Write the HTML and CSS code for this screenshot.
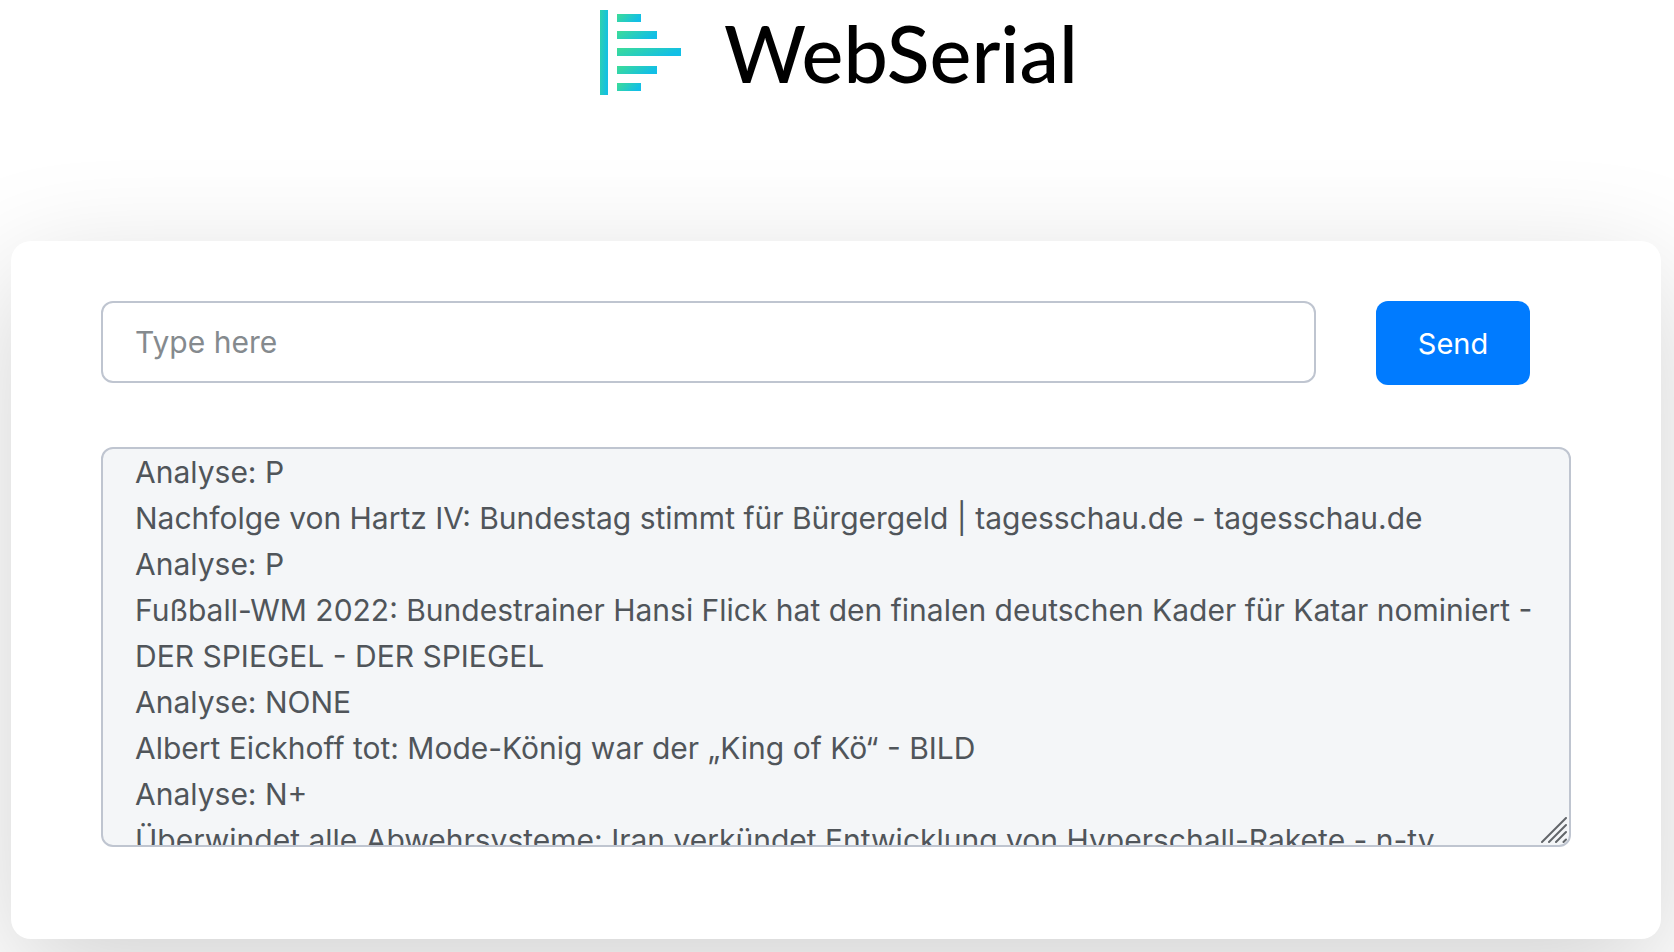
FILE: index.html
```html
<!DOCTYPE html>
<html lang="en">
<head>
<meta charset="utf-8">
<meta name="viewport" content="width=device-width, initial-scale=1">
<title>WebSerial</title>
<link rel="stylesheet" href="styles.css">
</head>
<body>
<header class="brand">
  <svg class="brand-mark" viewBox="0 0 82 86" aria-hidden="true">
    <defs>
      <linearGradient id="bar" x1="0" y1="0" x2="1" y2="0.3">
        <stop offset="0" stop-color="#3ddc97"/>
        <stop offset="1" stop-color="#12bfe6"/>
      </linearGradient>
      <linearGradient id="post" x1="0" y1="0" x2="1" y2="0.3">
        <stop offset="0" stop-color="#30d2ac"/>
        <stop offset="1" stop-color="#14c0e2"/>
      </linearGradient>
    </defs>
    <rect x="0" y="0" width="8" height="85" fill="url(#post)"/>
    <g fill="url(#bar)">
      <rect x="17" y="4" width="24" height="8"/>
      <rect x="17" y="21" width="40" height="8"/>
      <rect x="17" y="38" width="64" height="8"/>
      <rect x="17" y="56" width="40" height="8"/>
      <rect x="17" y="73" width="24" height="8"/>
    </g>
  </svg>
  <h1 class="brand-name">WebSerial</h1>
</header>
<main class="card">
  <form class="send-row">
    <input class="field message" type="text" placeholder="Type here" aria-label="Message">
    <button class="send" type="button">Send</button>
  </form>
  <div class="console">
    <textarea class="field log" aria-label="Serial output" readonly>Analyse: P
Nachfolge von Hartz IV: Bundestag stimmt für Bürgergeld | tagesschau.de - tagesschau.de
Analyse: P
Fußball-WM 2022: Bundestrainer Hansi Flick hat den finalen deutschen Kader für Katar nominiert - DER SPIEGEL - DER SPIEGEL
Analyse: NONE
Albert Eickhoff tot: Mode-König war der „King of Kö“ - BILD
Analyse: N+
Überwindet alle Abwehrsysteme: Iran verkündet Entwicklung von Hyperschall-Rakete - n-tv</textarea>
    <svg class="grip" viewBox="0 0 26 26" aria-hidden="true">
      <path d="M1 25 25 1M8 25 25 8M15 25 25 15M22.5 25 25 22.5"/>
    </svg>
  </div>
</main>
</body>
</html>
```
FILE: styles.css
```css
* {
  box-sizing: border-box;
}

body {
  margin: 0;
  min-height: 100vh;
  background: #fff;
  color: #50555a;
  font-family: Inter, "Liberation Sans", sans-serif;
  overflow: hidden;
}

.brand {
  display: flex;
  justify-content: center;
  gap: 42px;
  padding: 10px 0 0 4px;
}

.brand-mark {
  width: 82px;
  height: 86px;
}

.brand-name {
  margin: 0;
  color: #000;
  font-family: Lato, sans-serif;
  font-size: 79px;
  font-weight: 500;
  line-height: 86px;
}

.card {
  margin: 145px 13px 0 11px;
  padding: 60px 90px 92px;
  border-radius: 20px;
  background: #fff;
  box-shadow: 0 35px 120px rgba(0, 0, 0, 0.18);
}

.send-row {
  display: flex;
  align-items: flex-start;
  gap: 60px;
  padding-right: 41px;
}

.field {
  display: block;
  border: 2px solid #bfc5d0;
  border-radius: 12px;
  color: #50555a;
  font-family: inherit;
  font-size: 30px;
}

.message {
  flex: 1;
  min-width: 0;
  height: 82px;
  padding: 0 32px;
  background: #fff;
}

.message::placeholder {
  color: #858a8e;
  opacity: 1;
}

.send {
  width: 154px;
  height: 84px;
  padding: 0;
  border: 0;
  border-radius: 12px;
  background: #007bff;
  color: #fff;
  font-family: inherit;
  font-size: 29px;
}

.console {
  position: relative;
  margin-top: 62px;
}

.log {
  width: 100%;
  height: 400px;
  padding: 0 32px;
  background: #f4f6f8;
  line-height: 46px;
  overflow: hidden;
  resize: none;
}

.grip {
  position: absolute;
  right: 4px;
  bottom: 4px;
  width: 26px;
  height: 26px;
  fill: none;
  stroke: #62666a;
  stroke-width: 2;
  stroke-linecap: round;
}
```
